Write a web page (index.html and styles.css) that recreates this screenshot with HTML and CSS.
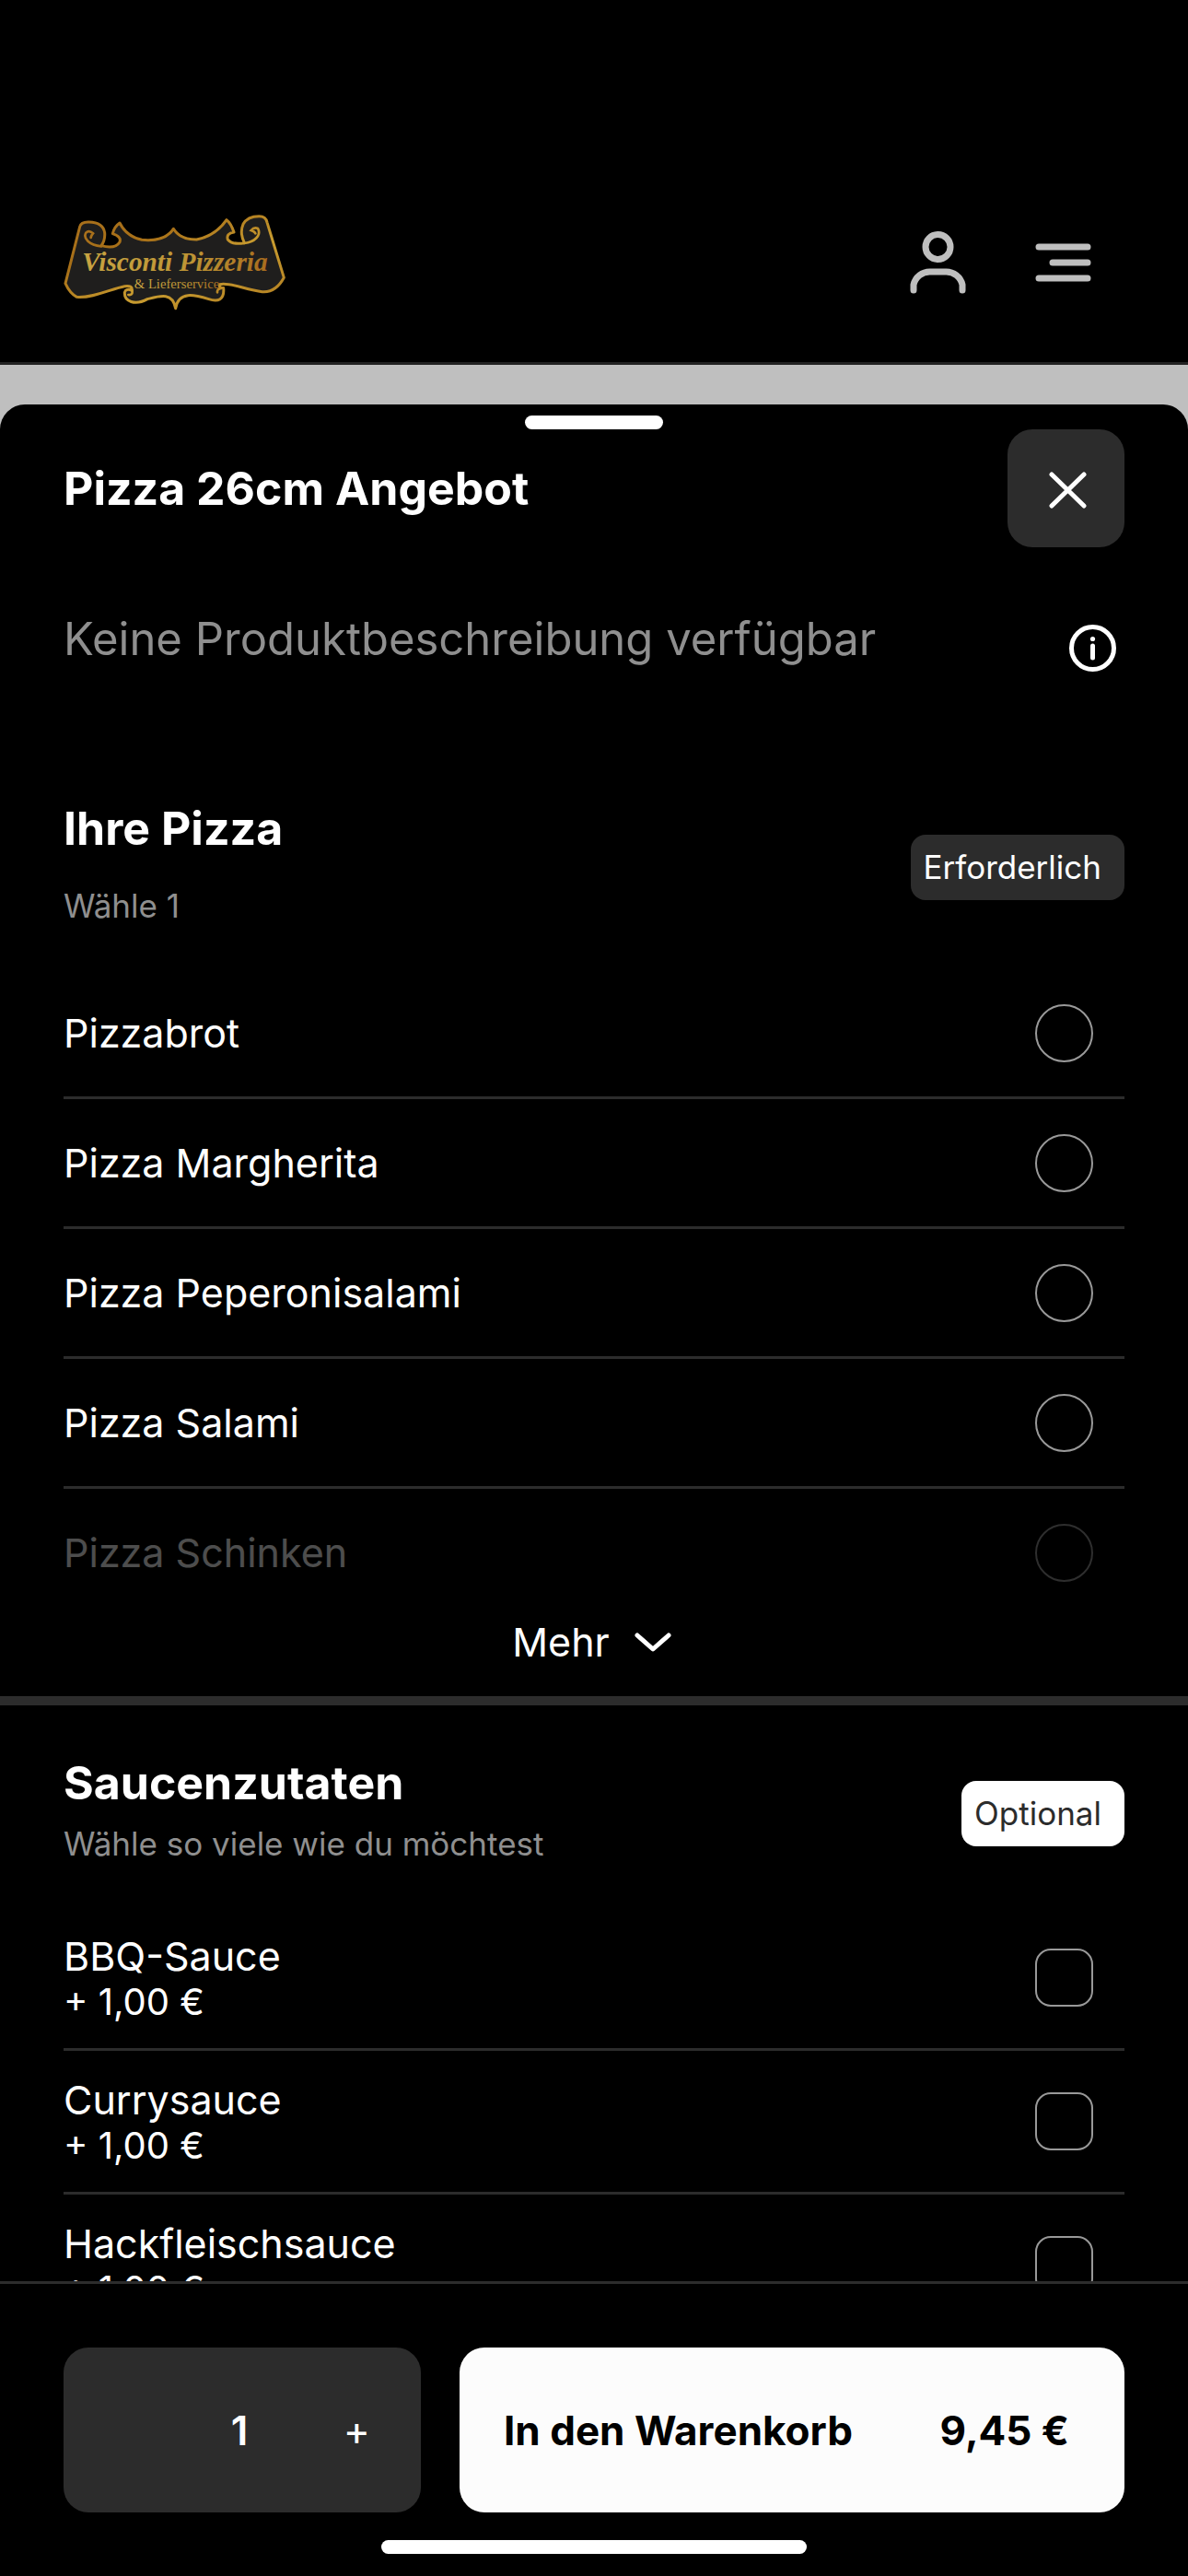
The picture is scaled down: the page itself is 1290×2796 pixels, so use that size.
FILE: index.html
```html
<!DOCTYPE html>
<html lang="de">
<head>
<meta charset="utf-8">
<meta name="viewport" content="width=device-width, initial-scale=1">
<title>Visconti Pizzeria – Pizza 26cm Angebot</title>
<link rel="stylesheet" href="styles.css">
</head>
<body>
<header class="site-header">
  <a class="logo" href="#" aria-label="Visconti Pizzeria &amp; Lieferservice">
    <svg viewBox="57 50 726 315" width="242" height="105">
      <defs>
        <linearGradient id="gold" x1="0" y1="0" x2="1" y2="1">
          <stop offset="0" stop-color="#a8701c"/>
          <stop offset=".3" stop-color="#a87018"/>
          <stop offset=".6" stop-color="#c89c30"/>
          <stop offset="1" stop-color="#b07c20"/>
        </linearGradient>
        <linearGradient id="gold-text" x1="0" y1="0" x2="1" y2="0">
          <stop offset="0" stop-color="#c8a442"/>
          <stop offset=".6" stop-color="#bd9434"/>
          <stop offset="1" stop-color="#a86c1e"/>
        </linearGradient>
      </defs>
      <path d="M63 277 L110 92 Q114 76 140 77 Q186 78 191 112 Q193 136 180 154 Q226 166 240 142 Q246 124 217 115 Q222 92 240 80 Q262 124 312 135 Q388 142 415 99 Q436 134 490 134 Q552 122 588 70 Q602 80 612 110 Q586 114 592 134 Q606 152 646 145 Q630 112 642 84 Q656 58 694 58 Q716 58 720 78 L775 258 Q748 308 704 304 C650 298 600 272 566 280 Q562 292 578 292 C582 330 560 338 530 328 C484 314 432 300 422 358 C412 304 370 318 330 328 C290 350 254 336 256 306 Q260 292 280 300 Q282 282 256 286 C214 294 150 326 100 321 Q78 310 63 277 Z" fill="#1f1e1d" stroke="url(#gold)" stroke-width="9" stroke-linejoin="round"/>
      <path d="M180 156 C140 152 120 130 130 112 Q140 102 153 114 Q146 122 146 128 M646 146 C680 142 702 120 690 98 Q678 92 668 104 Q680 108 682 114 M280 300 Q284 316 268 314 M578 292 Q556 292 558 306" fill="none" stroke="url(#gold)" stroke-width="8" stroke-linecap="round"/>
      <text class="logo-name" x="420" y="235" fill="url(#gold-text)">Visconti Pizzeria</text>
      <text class="logo-sub" x="426" y="292" fill="url(#gold-text)">&amp; Lieferservice</text>
    </svg>
  </a>
  <nav class="header-actions" aria-label="Hauptmenü">
    <button class="icon-button" type="button" aria-label="Konto">
      <svg viewBox="0 0 61 68" width="61" height="68" class="stroke-icon">
        <circle cx="30.500" cy="17" r="13.500"/>
        <path d="M4 64V58A18 18 0 0 1 22 44H39A18 18 0 0 1 57 58V64"/>
      </svg>
    </button>
    <button class="icon-button" type="button" aria-label="Menü">
      <svg viewBox="0 0 61 68" width="61" height="68" class="stroke-icon">
        <path d="M4 17H57M19 34H57M4 51H57"/>
      </svg>
    </button>
  </nav>
</header>

<div class="backdrop">
  <main class="sheet">
    <div class="handle"></div>
    <div class="sheet-header">
      <h1 class="title">Pizza 26cm Angebot</h1>
      <button class="close-button" type="button" aria-label="Schließen">
        <svg viewBox="0 0 44 44" width="44" height="44"><path d="M6 7L41 41M41 7L6 41"/></svg>
      </button>
    </div>
    <div class="description">
      <p class="description-text">Keine Produktbeschreibung verfügbar</p>
      <button class="info-button" type="button" aria-label="Produktinformationen">
        <svg viewBox="0 0 51 51" width="51" height="51">
          <circle cx="25.5" cy="25.5" r="23" fill="none" stroke="#fff" stroke-width="5"/>
          <circle cx="25.5" cy="15.500" r="2.600" fill="#fff"/>
          <path d="M25.500 23V36" stroke="#fff" stroke-width="5" stroke-linecap="round"/>
        </svg>
      </button>
    </div>

    <section class="group">
      <div class="group-header">
        <div class="group-titles group-titles-wide">
          <h2 class="title">Ihre Pizza</h2>
          <p class="hint">Wähle 1</p>
        </div>
        <span class="badge">Erforderlich</span>
      </div>
      <div class="options">
        <label class="option"><span class="option-name">Pizzabrot</span><input class="choice choice-radio" type="radio" name="pizza"></label>
        <label class="option"><span class="option-name">Pizza Margherita</span><input class="choice choice-radio" type="radio" name="pizza"></label>
        <label class="option"><span class="option-name">Pizza Peperonisalami</span><input class="choice choice-radio" type="radio" name="pizza"></label>
        <label class="option"><span class="option-name">Pizza Salami</span><input class="choice choice-radio" type="radio" name="pizza"></label>
        <label class="option option-faded"><span class="option-name">Pizza Schinken</span><input class="choice choice-radio" type="radio" name="pizza"></label>
      </div>
      <button class="more-button" type="button">Mehr
        <svg viewBox="0 0 50 22" width="50" height="22"><path d="M8 4L25 19L42 4"/></svg>
      </button>
    </section>

    <section class="group group-divided">
      <div class="group-header">
        <div class="group-titles">
          <h2 class="title">Saucenzutaten</h2>
          <p class="hint">Wähle so viele wie du möchtest</p>
        </div>
        <span class="badge badge-light">Optional</span>
      </div>
      <div class="options">
        <label class="option option-priced"><span class="option-text"><span class="option-name">BBQ-Sauce</span><span class="option-price">+ 1,00 €</span></span><input class="choice" type="checkbox"></label>
        <label class="option option-priced"><span class="option-text"><span class="option-name">Currysauce</span><span class="option-price">+ 1,00 €</span></span><input class="choice" type="checkbox"></label>
        <label class="option option-priced"><span class="option-text"><span class="option-name">Hackfleischsauce</span><span class="option-price">+ 1,00 €</span></span><input class="choice" type="checkbox"></label>
      </div>
    </section>
  </main>
</div>

<footer class="footer">
  <div class="order-bar">
    <div class="quantity">
      <button class="quantity-button" type="button" aria-label="Menge verringern" disabled></button>
      <input class="quantity-input" type="text" inputmode="numeric" aria-label="Menge" value="1">
      <button class="quantity-button" type="button" aria-label="Menge erhöhen">+</button>
    </div>
    <button class="cart-button" type="button"><span>In den Warenkorb</span><span>9,45 €</span></button>
  </div>
  <div class="home-indicator"></div>
</footer>
</body>
</html>
```
FILE: styles.css
```css
* {
  box-sizing: border-box;
}

body {
  margin: 0;
  height: 100vh;
  display: flex;
  flex-direction: column;
  overflow: hidden;
  background: #000;
  color: #fff;
  font-family: Inter, "Liberation Sans", sans-serif;
  font-size: 44px;
}

h1, h2, p {
  margin: 0;
}

button, input {
  margin: 0;
  padding: 0;
  border: 0;
  background: none;
  color: inherit;
  font: inherit;
}

svg {
  display: block;
}

/* Site header */
.site-header {
  flex: none;
  display: flex;
  align-items: center;
  justify-content: space-between;
  padding: 232px 105px 56px 69px;
  border-bottom: 3px solid #222;
}

.logo-name,
.logo-sub {
  font-family: "Liberation Serif", serif;
  text-anchor: middle;
}

.logo-name {
  font-size: 88px;
  font-weight: 700;
  font-style: italic;
}

.logo-sub {
  font-size: 44px;
}

.header-actions {
  display: flex;
  gap: 75px;
}

.stroke-icon {
  fill: none;
  stroke: #bfbfbf;
  stroke-width: 7;
  stroke-linecap: round;
  stroke-linejoin: round;
}

/* Product sheet */
.backdrop {
  flex: 1;
  min-height: 0;
  display: flex;
  flex-direction: column;
  padding-top: 43px;
  background: #bfbfbf;
}

.sheet {
  flex: 1;
  min-height: 0;
  overflow: hidden;
  padding-top: 12px;
  background: #000;
  border-radius: 27px 27px 0 0;
}

.handle {
  width: 150px;
  height: 15px;
  margin: 0 auto;
  border-radius: 8px;
  background: #fff;
}

.sheet-header,
.description,
.group-header {
  display: flex;
  justify-content: space-between;
  padding: 0 69px;
}

.sheet-header,
.group-header {
  align-items: center;
}

.title {
  font-size: 50px;
  font-weight: 700;
  line-height: 60px;
}

.close-button {
  display: grid;
  place-items: center;
  width: 127px;
  height: 128px;
  border-radius: 27px;
  background: #2c2c2c;
}

.close-button path,
.more-button path {
  fill: none;
  stroke: #fff;
  stroke-width: 5;
  stroke-linecap: round;
  stroke-linejoin: round;
}

.description {
  align-items: flex-start;
  margin-top: 68px;
  padding-right: 78px;
}

.description-text {
  color: #8f8f8f;
  font-size: 49px;
  line-height: 64px;
}

.info-button {
  margin-top: 16px;
}

/* Option groups */
.group {
  padding-top: 140px;
}

.group-divided {
  border-top: 10px solid #2c2c2c;
  padding-top: 54px;
}

.group-titles {
  display: flex;
  flex-direction: column;
  gap: 6px;
}

.group-titles-wide {
  gap: 24px;
}

.hint {
  color: #8f8f8f;
  font-size: 35px;
  line-height: 60px;
}

.badge {
  padding: 0 25px 0 14px;
  border-radius: 16px;
  background: #2c2c2c;
  font-size: 35px;
  line-height: 71px;
}

.badge-light {
  background: #fff;
  color: #2c2c2c;
}

.options {
  margin: 39px 69px 0;
}

.option {
  display: flex;
  align-items: center;
  justify-content: space-between;
  min-height: 141px;
  padding-right: 34px;
  border-bottom: 3px solid #2c2c2c;
}

.option-faded {
  min-height: 138px;
  border-bottom: 0;
  opacity: .3;
}

.option-priced {
  min-height: 156px;
}

.option-text {
  display: flex;
  flex-direction: column;
}

.option-name {
  font-size: 43px;
  line-height: 52px;
}

.option-price {
  font-size: 40px;
  line-height: 48px;
}

.choice {
  appearance: none;
  flex: none;
  width: 63px;
  height: 63px;
  border: 2px solid #999;
  border-radius: 17px;
}

.choice-radio {
  border-radius: 50%;
}

.choice:checked {
  background: #fff;
}

.more-button {
  display: flex;
  align-items: center;
  gap: 22px;
  margin: 0 auto;
  padding-bottom: 31px;
  font-size: 43px;
  line-height: 56px;
}

/* Order footer */
.footer {
  flex: none;
  padding: 69px 69px 24px;
  border-top: 3px solid #2c2c2c;
}

.order-bar {
  display: flex;
  gap: 42px;
}

.quantity {
  flex: none;
  display: grid;
  grid-template-columns: repeat(3, 1fr);
  width: 388px;
  padding-right: 6px;
  border-radius: 27px;
  background: #2c2c2c;
}

.quantity-input {
  width: 100%;
  text-align: center;
  font-weight: 600;
}

.cart-button {
  flex: 1;
  display: flex;
  align-items: center;
  justify-content: space-between;
  height: 179px;
  padding: 0 60px 0 48px;
  border-radius: 27px;
  background: #fcfcfc;
  color: #000;
  font-weight: 700;
}

.home-indicator {
  width: 462px;
  height: 15px;
  margin: 30px auto 0;
  border-radius: 8px;
  background: #fff;
}
```
